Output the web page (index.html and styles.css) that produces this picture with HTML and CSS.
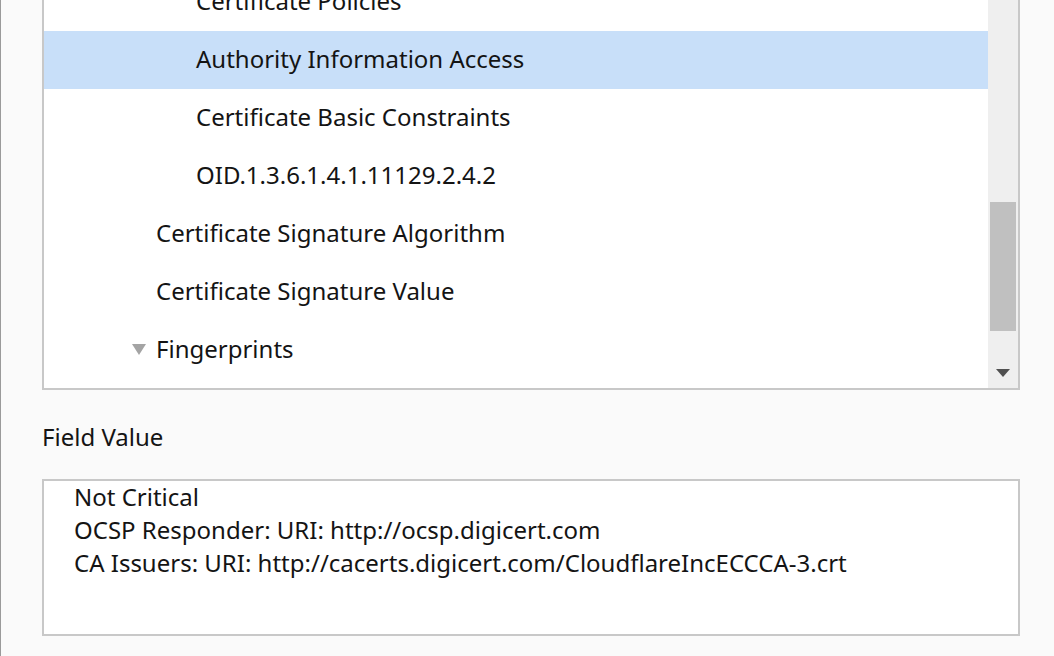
FILE: index.html
```html
<!DOCTYPE html>
<html>
<head>
<meta charset="utf-8">
<link rel="stylesheet" href="styles.css">
</head>
<body>
<div class="edge"></div>
<div class="panel">
  <div class="tree">
    <div class="rows">
      <div class="row lvl2">Certificate Policies</div>
      <div class="row lvl2 selected">Authority Information Access</div>
      <div class="row lvl2">Certificate Basic Constraints</div>
      <div class="row lvl2">OID.1.3.6.1.4.1.11129.2.4.2</div>
      <div class="row lvl1">Certificate Signature Algorithm</div>
      <div class="row lvl1">Certificate Signature Value</div>
      <div class="row expander"><span class="twisty"></span>Fingerprints</div>
    </div>
    <div class="scrollbar">
      <div class="thumb"></div>
      <div class="arrow"></div>
    </div>
  </div>
  <div class="label">Field Value</div>
  <div class="value">
    <div class="line">Not Critical</div>
    <div class="line">OCSP Responder: URI: http://ocsp.digicert.com</div>
    <div class="line">CA Issuers: URI: http://cacerts.digicert.com/CloudflareIncECCCA-3.crt</div>
  </div>
</div>
</body>
</html>
```
FILE: styles.css
```css
html, body {
  margin: 0;
  padding: 0;
  background: #fafafa;
  height: 656px;
  overflow: hidden;
}
body {
  font-family: "Noto Sans", "Open Sans", sans-serif;
  font-size: 24px;
  color: #141414;
  position: relative;
}
.edge {
  position: absolute;
  left: 0;
  top: 0;
  width: 1px;
  height: 656px;
  background: #9a9a9a;
}
.panel {
  margin-left: 42px;
  width: 978px;
}
.tree {
  margin-top: -29px;
  border: 2px solid #c8c8c8;
  background: #ffffff;
  display: flex;
}
.rows {
  flex: 1;
  padding-bottom: 9px;
}
.row {
  height: 58px;
  line-height: 56px;
  white-space: nowrap;
}
.lvl2 { padding-left: 152px; }
.lvl1 { padding-left: 112px; }
.expander {
  height: 56px;
  padding-bottom: 2px;
  padding-left: 88px;
  display: flex;
  align-items: center;
}
.twisty {
  width: 0;
  height: 0;
  border-left: 7px solid transparent;
  border-right: 7px solid transparent;
  border-top: 11px solid #a4a4a4;
  margin-right: 10px;
}
.selected { background: #c8dff9; }
.scrollbar {
  width: 30px;
  background: #efefef;
  display: flex;
  flex-direction: column;
  align-items: center;
}
.thumb {
  margin-top: 229px;
  width: 26px;
  height: 129px;
  background: #c0c0c0;
}
.arrow {
  margin-top: 38px;
  width: 0;
  height: 0;
  border-left: 7px solid transparent;
  border-right: 7px solid transparent;
  border-top: 8px solid #505050;
}
.label {
  margin-top: 30px;
  margin-bottom: 26px;
  height: 33px;
  line-height: 33px;
}
.value {
  border: 2px solid #c8c8c8;
  background: #ffffff;
  height: 153px;
  padding-left: 30px;
}
.line {
  height: 33px;
  line-height: 32px;
  white-space: nowrap;
}
```
